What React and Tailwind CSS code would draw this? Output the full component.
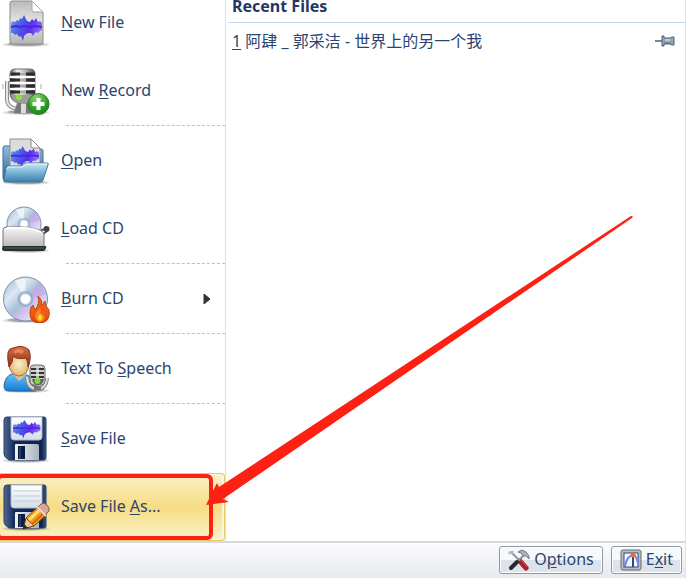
import { useId } from "react";

const Wave = ({ id, transform }) => (
  <g transform={transform}>
    <linearGradient id={id} x1="0" y1="0" x2="1" y2="0.3">
      <stop offset="0" stopColor="#6ea4f2" />
      <stop offset="0.35" stopColor="#4a62e6" />
      <stop offset="0.7" stopColor="#5a2cf0" />
      <stop offset="1" stopColor="#8a66f4" />
    </linearGradient>
    <path
      d="M0 8l2-2 2 1 2-2 2 1 1-3 2 1 2-4 2 4 1 2 3 1 2-3 2 2 2-3 2 4 2-1 2 2v7l-2 1-2 2-2-1-2 2-1 2-2-3-3 0-2 1-2 2-1 5-2-5-2 1-2-3-2 1-2-2-2 0z"
      fill={`url(#${id})`}
    />
    <path d="M0 12l5-1 4 1 4-1 6 1 5-1 7 1" fill="none" stroke="#4526e2" strokeWidth="2" />
  </g>
);

const Svg = ({ children }) => (
  <svg viewBox="0 0 48 48" className="size-12 shrink-0" aria-hidden="true">
    {children}
  </svg>
);

const Shadow = () => (
  <>
    <ellipse cx="24" cy="45.500" rx="23" ry="2.500" fill="#000" opacity="0.14" />
    <ellipse cx="24" cy="45" rx="18" ry="2" fill="#000" opacity="0.25" />
  </>
);

function NewFileIcon() {
  const id = useId();
  return (
    <Svg>
      <linearGradient id={`${id}p`} x1="0" y1="0" x2="0" y2="1">
        <stop offset="0" stopColor="#b9b9b9" />
        <stop offset="0.5" stopColor="#e6e6e6" />
        <stop offset="1" stopColor="#b4b4b4" />
      </linearGradient>
      <Shadow />
      <path
        d="M10 2h20l11 11v30q0 2-2 2H10q-2 0-2-2V4q0-2 2-2z"
        fill={`url(#${id}p)`}
        stroke="#8b8b8b"
      />
      <path d="M30 2v9q0 2 2 2h9z" fill="#fff" stroke="#a5a5a5" />
      <Wave id={`${id}w`} transform="translate(9 16)" />
    </Svg>
  );
}

function RecordIcon() {
  const id = useId();
  return (
    <Svg>
      <linearGradient id={`${id}m`}>
        <stop offset="0" stopColor="#555" />
        <stop offset="0.3" stopColor="#f4f4f4" />
        <stop offset="0.6" stopColor="#bbb" />
        <stop offset="1" stopColor="#4b4b4b" />
      </linearGradient>
      <radialGradient id={`${id}g`} cx="0.4" cy="0.2" r="0.9">
        <stop offset="0" stopColor="#8ad66a" />
        <stop offset="0.6" stopColor="#2e9e2a" />
        <stop offset="1" stopColor="#1a7a17" />
      </radialGradient>
      <Shadow />
      <path d="M5 14v18q0 10 14 10" fill="none" stroke="#8c8c8c" strokeWidth="4" />
      <path d="M5 14v18q0 10 14 10" fill="none" stroke="#e4e4e4" strokeWidth="2" />
      <path d="M1 17v5M39 17v5" stroke="#aaa" strokeWidth="1" />
      <path d="M15 36h13l4 10H12z" fill="#777" />
      <path d="M19 36h5v10h-5z" fill="#ddd" />
      <path
        d="M13 2h15q5 0 5 5v20q0 8-8 9h-8q-8-1-9-9V7q0-5 5-5z"
        fill={`url(#${id}m)`}
        stroke="#707070"
      />
      <path
        d="M9 7h9M24 7h9M8 13h10M24 13h9M8 19h10M24 19h9M8 25h10M24 25h9"
        stroke="#2c2c2c"
        strokeWidth="3"
      />
      <path d="M18 7h6M18 13h6M18 19h6M18 25h6" stroke="#aaa" strokeWidth="2" />
      <path d="M8 10h25M8 16h25M8 22h25" stroke="#fff" strokeWidth="2" />
      <path d="M9 28h23q-2 7-8 8h-7q-6-1-8-8z" fill="#9d9d9d" />
      <circle cx="17" cy="30" r="3" fill="#8ee33c" />
      <circle cx="36.500" cy="37" r="10.500" fill={`url(#${id}g)`} stroke="#247c20" />
      <path d="M36.500 31v12M30.500 37h12" stroke="#fff" strokeWidth="4" />
    </Svg>
  );
}

function OpenIcon() {
  const id = useId();
  return (
    <Svg>
      <linearGradient id={`${id}b`} x1="0" y1="0" x2="0" y2="1">
        <stop offset="0" stopColor="#8fbfe0" />
        <stop offset="1" stopColor="#2a6390" />
      </linearGradient>
      <linearGradient id={`${id}f`} x1="0" y1="0" x2="0" y2="1">
        <stop offset="0" stopColor="#cdeaf5" />
        <stop offset="0.5" stopColor="#79b4d5" />
        <stop offset="1" stopColor="#3c7fac" />
      </linearGradient>
      <Shadow />
      <path
        d="M3 9h9l2 3h25q2 0 2 2v29H3q-2 0-2-2V11q0-2 2-2z"
        fill={`url(#${id}b)`}
        stroke="#37719c"
      />
      <path d="M8 2h21l9 9v26H8z" fill="#dcdcdc" stroke="#8e8e8e" />
      <path d="M29 2v7q0 2 2 2h7z" fill="#fff" stroke="#888" />
      <Wave id={`${id}w`} transform="translate(9 9) scale(.9 .85)" />
      <path
        d="M4 31q1-2 3-2h12l4-3h22q2 0 1 2l-5 15q-1 2-3 2H3q-2 0-1-3z"
        fill={`url(#${id}f)`}
        stroke="#3b789f"
      />
      <path d="M5 32l1-2h14l4-3h21" fill="none" stroke="#e6f8ff" />
    </Svg>
  );
}

const Disc = ({ id, cx, cy, r }) => (
  <>
    <linearGradient id={id} x1="0" y1="0" x2="1" y2="1">
      <stop offset="0" stopColor="#9fb4ca" />
      <stop offset="0.3" stopColor="#dbe7f3" />
      <stop offset="0.5" stopColor="#a8bfd6" />
      <stop offset="0.6" stopColor="#cdbcec" />
      <stop offset="0.8" stopColor="#dce8f4" />
      <stop offset="1" stopColor="#97aac0" />
    </linearGradient>
    <circle cx={cx} cy={cy} r={r} fill={`url(#${id})`} stroke="#7f8fa6" />
    <path
      d={`M${cx} ${cy}L${cx - r * 0.5} ${cy - r * 0.85}L${cx} ${cy - r + 1}z`}
      fill="#fff"
      opacity="0.6"
    />
    <path
      d={`M${cx} ${cy}L${cx + r * 0.6} ${cy - r * 0.75}L${cx + r * 0.94} ${cy - r * 0.2}z`}
      fill="#c5a5e8"
      opacity="0.6"
    />
    <circle cx={cx} cy={cy} r={r * 0.36} fill="#8ea8c3" opacity="0.75" />
    <circle cx={cx} cy={cy} r={r * 0.24} fill="#fff" stroke="#c3d3e3" strokeWidth="1" />
  </>
);

function LoadCdIcon() {
  const id = useId();
  return (
    <Svg>
      <linearGradient id={`${id}t`} x1="0" y1="0" x2="0" y2="1">
        <stop offset="0" stopColor="#f8f8f8" />
        <stop offset="1" stopColor="#b8b8b8" />
      </linearGradient>
      <Shadow />
      <Disc id={`${id}d`} cx={22} cy={19} r={17} />
      <path d="M39 25l5-1v3l-3 2" fill="none" stroke="#555" strokeWidth="2" />
      <circle cx="44.500" cy="24" r="3" fill="#3d4342" />
      <path
        d="M4 22h15q14 0 22 5 1 1 1 3v12H1V25q0-3 3-3z"
        fill={`url(#${id}t)`}
        stroke="#777"
      />
      <path d="M5 23h14q14 0 21 5" fill="none" stroke="#fff" strokeWidth="2" />
      <path d="M1 41h42q2 0 1 2l-1 2q-1 1-2 1H2q-2 0-2-3z" fill="#26302e" />
      <path d="M2 43h40" stroke="#526560" />
    </Svg>
  );
}

function BurnIcon() {
  const id = useId();
  return (
    <Svg>
      <linearGradient id={`${id}f`} x1="0" y1="0" x2="0" y2="1">
        <stop offset="0" stopColor="#ef6423" />
        <stop offset="0.7" stopColor="#f05812" />
        <stop offset="1" stopColor="#d54005" />
      </linearGradient>
      <Shadow />
      <Disc id={`${id}d`} cx={23.5} cy={24} r={22} />
      <path
        d="M36 21q5 4 4 10l3-5q0 5 4 9 2 12-9 13-11 0-10-11 0-5 3-7l2 5q5-6 3-14z"
        fill={`url(#${id}f)`}
        stroke="#c44512"
      />
      <path d="M38 33q-3 3-5 8 0 5 5 6 5-1 5-5-2-1-2-4l-2 2q0-4-1-7z" fill="#fa8519" />
      <path d="M38 39q-3 3-2 5 2 3 4 0 1-3-2-5z" fill="#ffd13a" />
    </Svg>
  );
}

function SpeechIcon() {
  const id = useId();
  return (
    <Svg>
      <radialGradient id={`${id}s`}>
        <stop offset="0" stopColor="#fff0c8" />
        <stop offset="1" stopColor="#dfb575" />
      </radialGradient>
      <linearGradient id={`${id}b`} x1="0" y1="0" x2="0" y2="1">
        <stop offset="0" stopColor="#66c2f8" />
        <stop offset="1" stopColor="#167ad0" />
      </linearGradient>
      <linearGradient id={`${id}h`} x1="0" y1="0" x2="0" y2="1">
        <stop offset="0" stopColor="#d87044" />
        <stop offset="1" stopColor="#8c2d12" />
      </linearGradient>
      <Shadow />
      <path
        d="M10 29q-7 2-8 12 0 5 5 5h27q2-12-9-16z"
        fill={`url(#${id}b)`}
        stroke="#2266a2"
      />
      <path d="M11 29l6 7 8-7-1-4H12z" fill="#e7bf83" />
      <ellipse cx="17" cy="19" rx="10" ry="12" fill={`url(#${id}s)`} stroke="#a16c39" />
      <path
        d="M7 22Q3 3 11 3 21-1 27 5q3 8-1 17 0-6-2-9-9 2-13-2 0 7-4 11z"
        fill={`url(#${id}h)`}
        stroke="#83371c"
      />
      <path d="M12 6q5-4 10 0l-2 3q-4-3-7 0z" fill="#f49b6a" opacity="0.7" />
      <path d="M25 32q1 12 10 12t10-11" fill="none" stroke="#8a8a8a" strokeWidth="4" />
      <path d="M25 32q1 12 10 12t10-11" fill="none" stroke="#dedede" strokeWidth="2" />
      <path d="M32 41h7v4h-7z" fill="#777" />
      <rect x="28" y="20" width="15" height="20" rx="4" fill="#ccc" stroke="#707070" />
      <path d="M29 24h13M29 28h13M29 32h13" stroke="#333" strokeWidth="2" />
      <path d="M34 22h3v12h-3z" fill="#eee" opacity="0.7" />
      <path d="M30 34h12q-1 6-6 6t-6-6z" fill="#5c6459" />
      <circle cx="35.500" cy="36" r="3" fill="#78dc42" />
    </Svg>
  );
}

function Floppy({ id, children }) {
  return (
    <Svg>
      <linearGradient id={`${id}n`}>
        <stop offset="0" stopColor="#52698e" />
        <stop offset="0.25" stopColor="#112a5c" />
        <stop offset="0.9" stopColor="#10244d" />
        <stop offset="1" stopColor="#405d8d" />
      </linearGradient>
      <linearGradient id={`${id}l`} x1="0" y1="0" x2="0" y2="1">
        <stop offset="0" stopColor="#fff" />
        <stop offset="1" stopColor="#d5dee7" />
      </linearGradient>
      <linearGradient id={`${id}s`}>
        <stop offset="0" stopColor="#f0f3f5" />
        <stop offset="1" stopColor="#a8b3be" />
      </linearGradient>
      <Shadow />
      <path
        d="M5 2h37q2 0 2 2v39q0 2-2 2H7q-5-3-5-6V5q0-3 3-3z"
        fill={`url(#${id}n)`}
        stroke="#263f6f"
      />
      <path d="M9 2h31v20q0 3-3 3H12q-3 0-3-3z" fill={`url(#${id}l)`} stroke="#adbac8" />
      <path d="M14 29h21q2 0 2 2v14H13V30q0-1 1-1z" fill={`url(#${id}s)`} />
      <rect x="16" y="31" width="7" height="13" fill="#0c1c40" />
      <path d="M18 32v12" stroke="#47618a" />
      {children}
    </Svg>
  );
}

function SaveIcon() {
  const id = useId();
  return (
    <Floppy id={id}>
      <Wave id={`${id}w`} transform="translate(11 5) scale(.88 .7)" />
    </Floppy>
  );
}

function SaveAsIcon() {
  const id = useId();
  return (
    <Floppy id={id}>
      <path d="M11 8h27M11 13h27M11 18h27" stroke="#bdcbd8" />
      <path d="M21 46l3-11 5 2 3 6z" fill="#edc48d" stroke="#5c361a" />
      <path d="M21 46l1-5 4 4z" fill="#30241c" />
      <path d="M24 35l13-12 8 8-13 12z" fill="#f49b19" stroke="#8a4708" />
      <path d="M27 37l13-12" stroke="#ffe06d" strokeWidth="3" />
      <path d="M30 41l13-12" stroke="#d06b0b" strokeWidth="2" />
      <path d="M35 25l4-4q3-2 6 1t2 6l-4 4z" fill="#dba69c" stroke="#8d5649" />
      <path d="M35 24l9 9" stroke="#e0dedc" strokeWidth="2" />
    </Floppy>
  );
}

const menu = [
  { before: "", hot: "N", after: "ew File", Icon: NewFileIcon },
  { before: "New ", hot: "R", after: "ecord", Icon: RecordIcon, divider: true },
  { before: "", hot: "O", after: "pen", Icon: OpenIcon },
  { before: "", hot: "L", after: "oad CD", Icon: LoadCdIcon, divider: true },
  { before: "", hot: "B", after: "urn CD", Icon: BurnIcon, divider: true, submenu: true },
  { before: "Text To ", hot: "S", after: "peech", Icon: SpeechIcon, divider: true },
  { before: "", hot: "S", after: "ave File", Icon: SaveIcon },
  { before: "Save File ", hot: "A", after: "s...", Icon: SaveAsIcon, active: true },
];

function MenuItem({ item }) {
  const { before, hot, after, Icon, divider, submenu, active } = item;
  return (
    <li>
      <button
        type="button"
        className={`relative flex h-[68px] w-full items-center gap-[11px] pl-0.5 text-left ${
          active
            ? "rounded-r border border-l-0 border-[#e8c968] bg-linear-to-b from-[#fbf1c8] via-[#f6dc82] to-[#fbf2c9] shadow-[inset_-1px_0_0_1px_#fdf6da]"
            : ""
        }`}
      >
        <Icon />
        <span className="grow whitespace-pre pb-0.5">
          {before}
          <u className="underline-offset-2">{hot}</u>
          {after}
        </span>
        {submenu && (
          <svg viewBox="0 0 8 12" className="mr-3.5 h-3 w-2" aria-hidden="true">
            <path d="M1 1l6 5-6 5z" fill="#333" stroke="#333" />
          </svg>
        )}
        {active && (
          <span className="absolute -left-1 top-0 right-[11px] bottom-0 rounded-md border-4 border-[#ff2014]" />
        )}
      </button>
      {divider && (
        <div className="ml-[66px] h-0.5 border-t border-dashed border-[#c0c0c0]" />
      )}
    </li>
  );
}

const PinIcon = () => (
  <svg viewBox="0 0 20 12" className="h-3 w-5" aria-hidden="true">
    <path d="M0 6h7" stroke="#4d6175" strokeWidth="1.500" />
    <path
      d="M7 1h2v2h6l2-1h2v8h-2l-2-1H9v2H7z"
      fill="#94a5b6"
      stroke="#4d6175"
    />
    <path d="M10 5h5" stroke="#e9eff4" />
    <path d="M9 8h7" stroke="#5c7084" />
  </svg>
);

const ToolsIcon = () => (
  <svg viewBox="0 0 22 22" className="size-[22px]" aria-hidden="true">
    <path d="M3 3l9 9" stroke="#8f979e" strokeWidth="2" />
    <path d="M1 5l1-2 2 1 1-2" fill="none" stroke="#b3babf" strokeWidth="2" />
    <path d="M12 12l6 7" stroke="#a92028" strokeWidth="5" strokeLinecap="round" />
    <path d="M13 11l6 7" stroke="#db5357" />
    <path d="M16 6L8 14" stroke="#8c959d" strokeWidth="2" />
    <path d="M10 3l4-2 4 2 3 4v3l-3-3-3 0-2-3z" fill="#a9b2b9" stroke="#747e87" />
    <path d="M9 13l-6 6" stroke="#252a2e" strokeWidth="4" strokeLinecap="round" />
  </svg>
);

const ExitIcon = () => (
  <svg viewBox="0 0 22 22" className="size-[22px]" aria-hidden="true">
    <rect x="1" y="1" width="20" height="20" rx="2" fill="#b9bdc2" stroke="#666b72" />
    <rect x="4" y="4" width="14" height="14" fill="#f5f8ff" stroke="#274a87" />
    <path d="M5 17Q7 7 13 6q3 0 5 8" fill="none" stroke="#7b7cf0" strokeWidth="2" />
    <path d="M13 6v12" stroke="#274a87" strokeWidth="2" />
    <circle cx="13" cy="6" r="2.500" fill="#f46b22" />
  </svg>
);

const footerButton =
  "flex h-7 items-center gap-1 rounded-[3px] border border-[#8e98a5] bg-linear-to-b from-[#f6f8fa] from-50% to-[#dce3ea] to-50% px-2 shadow-[inset_0_0_0_1px_#fff]";

export default function App() {
  return (
    <div className="relative flex min-h-screen flex-col overflow-hidden border-r border-[#dce3f0] bg-white font-['Noto_Sans','Noto_Sans_CJK_SC',sans-serif] text-base text-[#2b4470]">
      <main className="flex grow">
        <nav className="w-[226px] shrink-0 border-r border-[#dfe0e4]">
          <ul className="-mt-[11px]">
            {menu.map((item) => (
              <MenuItem key={item.before + item.hot + item.after} item={item} />
            ))}
          </ul>
        </nav>

        <section className="min-w-0 grow pl-0.5">
          <h2 className="h-[23px] border-b border-[#c6d6ec] pl-1 text-base leading-3 font-bold text-[#1f3864]">
            Recent Files
          </h2>
          <button
            type="button"
            className="flex h-9 w-full items-center justify-between pl-1 pr-2.5 text-left"
          >
            <span>
              <u className="underline-offset-2">1</u> 阿肆 _ 郭采洁 - 世界上的另一个我
            </span>
            <PinIcon />
          </button>
        </section>
      </main>

      <footer className="flex h-[37px] shrink-0 items-center justify-end gap-2 border-t-2 border-[#d7d8da] bg-linear-to-b from-[#fcfcfd] to-[#e6e9ee] pr-[3px] pb-0.5">
        <button type="button" className={footerButton}>
          <ToolsIcon />
          <span className="pb-0.5">
            O<u className="underline-offset-2">p</u>tions
          </span>
        </button>
        <button type="button" className={footerButton}>
          <ExitIcon />
          <span className="pb-0.5">
            E<u className="underline-offset-2">x</u>it
          </span>
        </button>
      </footer>

      <svg
        viewBox="206 215 428 292"
        className="pointer-events-none absolute left-[206px] top-[215px] h-[292px] w-[428px]"
        aria-hidden="true"
      >
        <path d="M206 505l11-22 2 4L631 216q3 0 1 2L223 499l6 3z" fill="#ff2014" />
      </svg>
    </div>
  );
}
